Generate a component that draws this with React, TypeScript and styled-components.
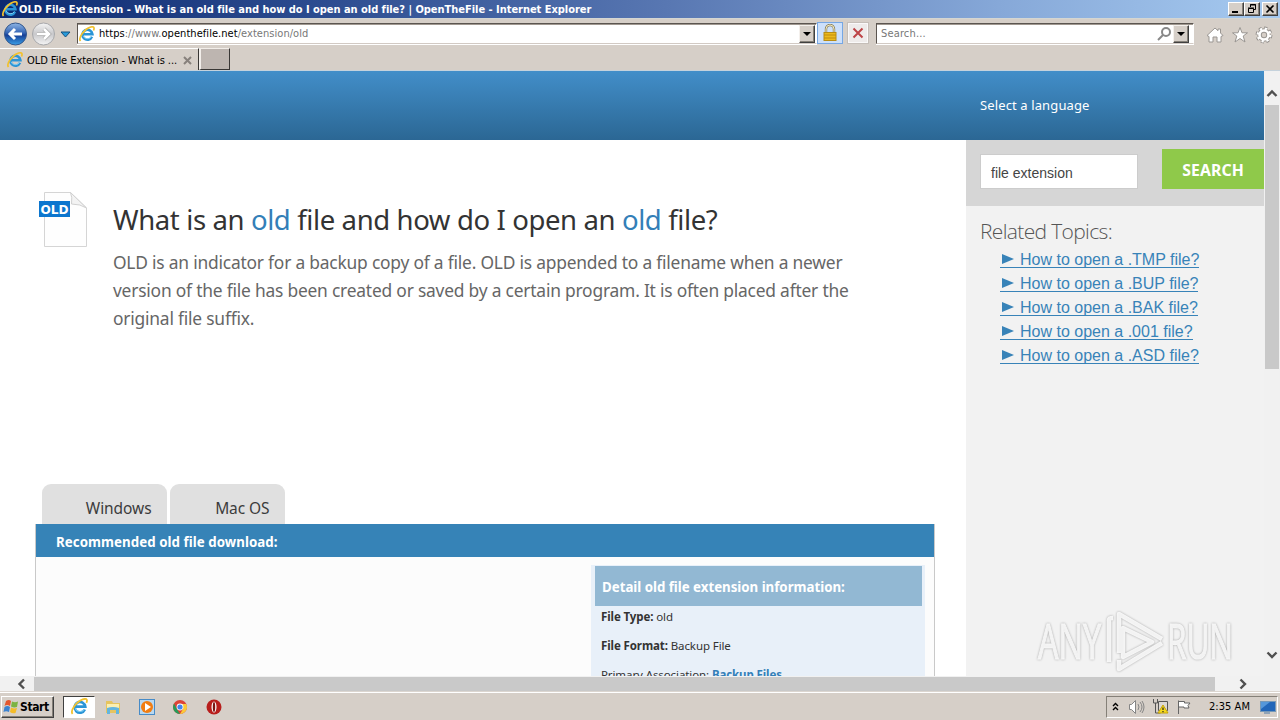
import styled, { createGlobalStyle, css } from "styled-components";

const GlobalStyle = createGlobalStyle`
  * {
    box-sizing: border-box;
  }

  body {
    margin: 0;
    overflow: hidden;
    font-family: "Noto Sans", "Open Sans", sans-serif;
  }
`;

const systemFont = css`
  font-family: "DejaVu Sans Condensed", "DejaVu Sans", sans-serif;
  font-stretch: condensed;
  font-size: 11px;
`;

// --- Window ---
const Window = styled.div`
  width: 1280px;
  height: 720px;
  display: flex;
  flex-direction: column;
  overflow: hidden;
  background: #d6cfc8;
`;

const TitleBar = styled.div`
  ${systemFont}
  height: 18px;
  flex: none;
  display: flex;
  align-items: center;
  padding: 0 2px;
  background: linear-gradient(90deg, #0d2a70 0%, #2c4c90 25%, #5877b2 52%, #86a8d8 78%, #a6caf0 100%);
  color: #fff;
`;

const WindowTitle = styled.span`
  flex: 1;
  margin-left: 1px;
  font-weight: 700;
  letter-spacing: -0.03px;
  white-space: nowrap;
`;

const WindowButton = styled.span<{ $gap?: number }>`
  width: 16px;
  height: 14px;
  margin-left: ${(props) => props.$gap || 0}px;
  display: flex;
  align-items: center;
  justify-content: center;
  background: #d6cfc8;
  border: 1px solid;
  border-color: #fff #404040 #404040 #fff;
  box-shadow: inset -1px -1px 0 #858078;
`;

const Toolbar = styled.div`
  height: 30px;
  flex: none;
  display: flex;
  align-items: flex-start;
  padding: 4px 7px 0 2px;
  border-top: 1px solid #d4d6d2;
`;

const NavButtons = styled.div`
  display: flex;
  align-items: center;
  width: 75px;
  height: 23px;
  margin-top: -1px;
`;

const Field = styled.div<{ $width: number }>`
  ${systemFont}
  width: ${(props) => props.$width}px;
  height: 21px;
  display: flex;
  align-items: center;
  padding-left: 1px;
  background: #fff;
  border: 1px solid;
  border-color: #5b5550 #fff #d2cac4 #5b5550;
  box-shadow: 0 1px 0 #fff, inset 0 1px 0 #a09890;
  color: #777;
`;

const FieldText = styled.span<{ $spacing?: number; $indent?: number }>`
  flex: 1;
  margin-left: ${(props) => props.$indent || 4}px;
  letter-spacing: ${(props) => props.$spacing || 0}px;
  white-space: nowrap;

  b {
    font-weight: 400;
    color: #000;
  }
`;

const DropButton = styled.span`
  width: 16px;
  height: 18px;
  display: flex;
  align-items: center;
  justify-content: center;
  background: #d6cfc8;
  border: 1px solid;
  border-color: #f4f0ec #404040 #404040 #f4f0ec;
  box-shadow: inset -1px -1px 0 #858078;

  &::after {
    content: "";
    border: 4px solid transparent;
    border-top-color: #000;
    border-bottom: 0;
  }
`;

const LockButton = styled.div`
  width: 26px;
  height: 22px;
  margin-top: -1px;
  display: flex;
  align-items: center;
  justify-content: center;
  background: #cde0fa;
  border: 1px solid #76a7e4;
`;

const StopButton = styled.div`
  width: 22px;
  height: 22px;
  margin: -1px 7px 0 4px;
  display: flex;
  align-items: center;
  justify-content: center;
  background: #eeebea;
  border: 1px solid #c5beb8;
  box-shadow: inset 0 0 0 1px #faf9f9;
`;

const ToolIcons = styled.div`
  flex: 1;
  height: 24px;
  display: flex;
  align-items: center;
  justify-content: flex-end;
  gap: 6.5px;
`;

const TabRow = styled.div`
  height: 23px;
  flex: none;
  display: flex;
  border-bottom: 1px solid #c5d2dc;
`;

const BrowserTab = styled.div`
  ${systemFont}
  width: 199px;
  display: flex;
  align-items: center;
  padding: 1px 6px 0 7px;
  border-top: 1px solid #fff;
  border-right: 1px solid #393735;
  color: #000;
`;

const TabLabel = styled.span`
  flex: 1;
  margin-left: 4px;
  letter-spacing: -0.05px;
  white-space: nowrap;
`;

const NewTab = styled.div`
  width: 31px;
  height: 22px;
  background: #bdb5b0;
  border: 1px solid;
  border-color: #f2eeea #393735 #393735 #f2eeea;
  border-left-width: 2px;
`;

// --- Web page ---
const Viewport = styled.div`
  height: 605px;
  flex: none;
  display: flex;
`;

const Page = styled.div`
  width: 1264px;
  display: flex;
  flex-direction: column;
  background: #fff;
`;

const Header = styled.div`
  height: 69px;
  flex: none;
  padding: 24px 0 0 980px;
  background: linear-gradient(#428ec9, #2b6794);
  color: #fff;
  font-size: 13px;
  line-height: 20px;
  letter-spacing: 0.12px;
`;

const Columns = styled.div`
  height: 536px;
  display: flex;
`;

const Main = styled.div`
  width: 966px;
  padding: 51px 31px 0 35px;
  overflow: hidden;
`;

const Intro = styled.div`
  height: 292px;
  display: flex;
`;

const FileIcon = styled.svg`
  width: 56px;
  height: 58px;
  flex: none;
  font: 700 11.5px "DejaVu Sans", sans-serif;
`;

const IntroText = styled.div`
  padding: 8px 0 0 22px;
`;

const Heading = styled.h1`
  margin: 0 0 7px;
  font-size: 27.5px;
  line-height: 42px;
  font-weight: 400;
  letter-spacing: -0.38px;
  color: #333;
  white-space: nowrap;

  em {
    font-style: normal;
    color: #337fb8;
  }
`;

const Lead = styled.p`
  margin: 0;
  font-size: 17.4px;
  line-height: 28px;
  letter-spacing: -0.21px;
  color: #666;
  white-space: nowrap;
`;

const OsTabs = styled.div`
  display: flex;
  gap: 3px;
  height: 41px;
  padding: 1px 0 0 7px;
`;

const OsTab = styled.div<{ $width: number }>`
  width: ${(props) => props.$width}px;
  padding: 12px 15.5px 0 0;
  border-radius: 9px 9px 0 0;
  background: #e0e0e0;
  color: #3c3c3c;
  font-size: 15.5px;
  line-height: 24px;
  letter-spacing: -0.08px;
  text-align: right;
`;

const Panel = styled.div`
  width: 900px;
  height: 160px;
  display: flex;
  flex-direction: column;
  background: #fcfcfc;
  border: 1px solid #c9c9c9;
  border-width: 0 1px;
`;

const PanelTitle = styled.div`
  height: 33px;
  flex: none;
  padding-left: 20px;
  background: #3683b7;
  color: #fff;
  font-size: 13.3px;
  line-height: 36px;
  font-weight: 700;
  letter-spacing: 0.05px;
`;

const Detail = styled.div`
  width: 334px;
  margin: 8px 9px 0 auto;
  padding: 1px 3px 0 4px;
  flex: 1;
  background: #e8f0f9;
`;

const DetailTitle = styled.div`
  height: 40px;
  padding-left: 7px;
  background: #92b8d3;
  color: #fff;
  font-size: 13.3px;
  line-height: 42px;
  font-weight: 700;
  letter-spacing: -0.02px;
`;

const DetailRow = styled.p`
  margin: 0 0 9px 6px;
  padding-top: 1px;
  color: #333;
  font-size: 11.5px;
  line-height: 19px;
  letter-spacing: -0.1px;
  white-space: nowrap;

  a {
    font-weight: 700;
    color: #337fb8;
  }
`;

const Sidebar = styled.div`
  width: 298px;
  background: #f2f2f2;
`;

const SearchBox = styled.div`
  height: 66px;
  display: flex;
  justify-content: space-between;
  padding: 9px 0 0 14px;
  background: #d6d6d6;
`;

const SearchInput = styled.div`
  width: 158px;
  height: 35px;
  margin-top: 5px;
  padding: 0 10px;
  background: #fff;
  border: 1px solid #ccc;
  color: #444;
  font: 14px/37px "Liberation Sans", Arial, sans-serif;
`;

const SearchButton = styled.div`
  width: 102px;
  height: 40px;
  background: #8fc94a;
  color: #fff;
  font-size: 15.8px;
  line-height: 43px;
  font-weight: 700;
  letter-spacing: 0.1px;
  text-align: center;
`;

const TopicsTitle = styled.h2`
  margin: 10px 0 5px 14px;
  color: #555;
  font: 300 21px/30px "Open Sans", "Noto Sans", sans-serif;
  letter-spacing: -0.65px;
`;

const Topics = styled.div`
  padding-left: 34px;
  display: flex;
  flex-direction: column;
  align-items: flex-start;
`;

const TopicLink = styled.a`
  height: 17px;
  margin-bottom: 7px;
  padding-top: 2px;
  display: flex;
  align-items: center;
  border-bottom: 1px solid #3883b8;
  color: #3883b8;
  font: 16px/16px "Liberation Sans", Arial, sans-serif;
  white-space: nowrap;

  svg {
    margin: 0 6px 0 2px;
  }
`;

// --- Scroll bars ---
const VScroll = styled.div`
  width: 16px;
  display: flex;
  flex-direction: column;
  align-items: center;
  padding: 17px 0 16px;
  background: #f1f1f1;
`;

const VThumb = styled.div`
  width: 14px;
  height: 264px;
  margin: 7px 0 auto;
  background: #c9c9c9;
`;

const HScroll = styled.div`
  height: 16px;
  flex: none;
  display: flex;
  align-items: center;
  padding: 0 32px 0 16px;
  background: #f1f1f1;
  border-bottom: 1px solid #dcd6d0;
`;

const HThumb = styled.div`
  width: 1181px;
  height: 14px;
  margin: 0 auto 0 8px;
  background: #c9c9c9;
`;

// --- Taskbar ---
const Taskbar = styled.div`
  ${systemFont}
  flex: 1;
  display: flex;
  align-items: center;
  padding: 1px 2px 1px 1px;
  border-top: 1px solid #fff;
`;

const StartButton = styled.div`
  width: 53px;
  height: 22px;
  display: flex;
  align-items: center;
  padding-left: 1px;
  border: 1px solid;
  border-color: #fff #404040 #404040 #fff;
  box-shadow: inset -1px -1px 0 #858078;
  color: #000;
  font-size: 12px;
  font-weight: 700;
  letter-spacing: -0.4px;
`;

const ActiveTask = styled.div`
  width: 32px;
  height: 22px;
  margin-left: 9px;
  display: flex;
  align-items: center;
  justify-content: center;
  background: #fff;
  border: 1px solid;
  border-color: #404040 #fff #fff #404040;
`;

const Pinned = styled.div`
  flex: 1;
  display: flex;
  align-items: center;
  gap: 18px;
  margin-left: 10px;
`;

const Tray = styled.div`
  width: 172px;
  height: 22px;
  display: flex;
  align-items: center;
  padding-left: 5px;
  border: 1px solid;
  border-color: #858078 #fff #fff #858078;
  color: #000;
`;

const TrayIcon = styled.svg<{ $gap: number }>`
  flex: none;
  margin-left: ${(props) => props.$gap}px;
`;

const Clock = styled.span`
  width: 42px;
  margin: 0 9px 0 17px;
  letter-spacing: 0.05px;
  white-space: nowrap;
`;

// Translucent mark lying over the bottom right of the page
const Watermark = styled.div`
  position: absolute;
  left: 1036px;
  top: 606px;
  width: 220px;
  height: 70px;

  svg {
    display: block;
    filter: drop-shadow(0 0 1px #999);
    font: 500 50px "Open Sans", sans-serif;
  }
`;

function IeIcon({ size = 16 }: { size?: number }) {
  return (
    <svg width={size} height={size} viewBox="0 0 16 16" fill="none">
      <path d="M13 10.800A5 5 0 1 1 13.400 8.200H4.500" stroke="#2b95d6" strokeWidth="2.600" />
      <path d="M12.500 10.600A4.800 4.800 0 0 1 4 9.700M4 6.500a4.500 4.500 0 0 1 4-3" stroke="#7dcdf3" strokeWidth="1" />
      <path d="M1.500 15C-1 12 5 3.500 11 1.300c4-1.500 4.700.6 3.500 3.200" stroke="#f2c12e" strokeWidth="1.700" />
    </svg>
  );
}

function NavIcons() {
  return (
    <svg width="75" height="24" viewBox="0 0 75 24">
      <defs>
        <linearGradient id="back" x2="0" y2="1">
          <stop stopColor="#8fb6e5" />
          <stop offset=".45" stopColor="#3565b5" />
          <stop offset=".55" stopColor="#173f96" />
          <stop offset="1" stopColor="#39a0e8" />
        </linearGradient>
        <linearGradient id="forward" x2="0" y2="1">
          <stop stopColor="#f5f5f5" />
          <stop offset=".5" stopColor="#c8c8cb" />
          <stop offset="1" stopColor="#f5f5f5" />
        </linearGradient>
      </defs>
      <circle cx="13.5" cy="12" r="11" fill="url(#back)" stroke="#34578c" />
      <path d="M20 12H8m5-5-5 5 5 5" fill="none" stroke="#fff" strokeWidth="3" />
      <circle cx="41.5" cy="12" r="11" fill="url(#forward)" stroke="#a7a8ab" />
      <path d="M35 12h12m-5-5 5 5-5 5" fill="none" stroke="#aaa" strokeWidth="4" />
      <path d="M35 12h12m-5-5 5 5-5 5" fill="none" stroke="#fff" strokeWidth="2.5" />
      <path d="M59 10h9l-4.500 5z" fill="#279bdb" stroke="#14507e" />
    </svg>
  );
}

function Chevron({ d, width = 16, height = 16 }: { d: string; width?: number; height?: number }) {
  return (
    <svg width={width} height={height} viewBox={`0 0 ${width} ${height}`}>
      <path d={d} fill="none" stroke="#505050" strokeWidth="2.4" />
    </svg>
  );
}

const topics = ["TMP", "BUP", "BAK", "001", "ASD"];

function BrowserChrome() {
  return (
    <>
      <TitleBar>
        <IeIcon />
        <WindowTitle>
          OLD File Extension - What is an old file and how do I open an old file? | OpenTheFile - Internet Explorer
        </WindowTitle>
        <WindowButton>
          <svg width="10" height="10"><path d="M1 8h6" stroke="#000" strokeWidth="2" /></svg>
        </WindowButton>
        <WindowButton>
          <svg width="10" height="10" fill="none" stroke="#000">
            <path d="M3.500 3V.5h5v5H7M3 1h6M1.500 4.500h5v4h-5zM1 4h6" />
          </svg>
        </WindowButton>
        <WindowButton $gap={2}>
          <svg width="10" height="10"><path d="m1.500 1.500 7 7m0-7-7 7" stroke="#000" strokeWidth="1.600" /></svg>
        </WindowButton>
      </TitleBar>
      <Toolbar>
        <NavButtons>
          <NavIcons />
        </NavButtons>
        <Field $width={740}>
          <IeIcon />
          <FieldText $spacing={0.05}>
            <b>https</b>://www.<b>openthefile.net</b>/extension/old
          </FieldText>
          <DropButton />
          <svg width="1" height="18" />
        </Field>
        <LockButton>
          <svg width="16" height="18" viewBox="0 0 16 18">
            <path d="M4 9V5a4 4 0 0 1 8 0v4" fill="none" stroke="#8a8060" strokeWidth="2.400" />
            <path d="M4 9V5a4 4 0 0 1 8 0v4" fill="none" stroke="#f2e9ba" strokeWidth="1" />
            <rect x="2" y="8.500" width="12" height="8" fill="#ecb91b" stroke="#b88c14" />
            <path d="M2 11h12M2 14h12" stroke="#c18c0c" />
          </svg>
        </LockButton>
        <StopButton>
          <svg width="12" height="12"><path d="m1.500 1.500 9 9m0-9-9 9" stroke="#bd4447" strokeWidth="2" /></svg>
        </StopButton>
        <Field $width={318}>
          <FieldText $spacing={0.15} $indent={3}>Search...</FieldText>
          <svg width="16" height="16" fill="none" stroke="#888" strokeWidth="2">
            <circle cx="9" cy="6" r="4" />
            <path d="m6 9-5 5" />
          </svg>
          <DropButton />
          <svg width="4" height="18" />
        </Field>
        <ToolIcons>
          <svg width="18" height="18" fill="#fff" stroke="#9a9692">
            <path d="M1 9.500 9 2l3 2.700V3h2.500v4L17 9.500l-2 1V16h-4v-5H7v5H3v-5.500z" />
          </svg>
          <svg width="18" height="18" fill="#fff" stroke="#9a9692">
            <path d="m9 1.500 2 5.300h5.500L12.200 10l1.800 6-5-3.500L4 16l1.800-6-4.300-3.200H7z" />
          </svg>
          <svg width="18" height="18" fill="none">
            <circle cx="9" cy="9" r="6.600" stroke="#8f8b87" strokeWidth="3.600" strokeDasharray="2.900 2.280" />
            <circle cx="9" cy="9" r="4.500" stroke="#9a9692" strokeWidth="4.500" />
            <circle cx="9" cy="9" r="6.300" stroke="#fff" strokeWidth="2.400" strokeDasharray="2.200 2.750" />
            <circle cx="9" cy="9" r="4.500" stroke="#fff" strokeWidth="2.600" />
          </svg>
        </ToolIcons>
      </Toolbar>
      <TabRow>
        <BrowserTab>
          <IeIcon />
          <TabLabel>OLD File Extension - What is ...</TabLabel>
          <svg width="9" height="9"><path d="m1 1 7 7m0-7-7 7" stroke="#87817c" strokeWidth="2" /></svg>
        </BrowserTab>
        <NewTab />
      </TabRow>
    </>
  );
}

function App() {
  return (
    <Window>
      <GlobalStyle />
      <BrowserChrome />
      <Viewport>
        <Page>
          <Header>Select a language</Header>
          <Columns>
            <Main>
              <Intro>
                <FileIcon>
                  <path d="M9.500 1.500h26l16 15.500v38.500h-42z" fill="#fefefe" stroke="#d5d5d5" />
                  <path d="M35.500 1.500 51.500 17q-6-4-15-4 1-7-1-11.500" fill="#f3f3f3" stroke="#d0d0d0" />
                  <rect x="4" y="10" width="31" height="16" fill="#0c76ce" />
                  <text x="5.500" y="22.500" fill="#fff" textLength="28" lengthAdjust="spacingAndGlyphs">OLD</text>
                </FileIcon>
                <IntroText>
                  <Heading>
                    What is an <em>old</em> file and how do I open an <em>old</em> file?
                  </Heading>
                  <Lead>
                    OLD is an indicator for a backup copy of a file. OLD is appended to a filename when a newer
                    <br />
                    version of the file has been created or saved by a certain program. It is often placed after the
                    <br />
                    original file suffix.
                  </Lead>
                </IntroText>
              </Intro>
              <OsTabs>
                <OsTab $width={125}>Windows</OsTab>
                <OsTab $width={115}>Mac OS</OsTab>
              </OsTabs>
              <Panel>
                <PanelTitle>Recommended old file download:</PanelTitle>
                <Detail>
                  <DetailTitle>Detail old file extension information:</DetailTitle>
                  <DetailRow><b>File Type:</b> old</DetailRow>
                  <DetailRow><b>File Format:</b> Backup File</DetailRow>
                  <DetailRow>Primary Association: <a>Backup Files</a></DetailRow>
                </Detail>
              </Panel>
            </Main>
            <Sidebar>
              <SearchBox>
                <SearchInput>file extension</SearchInput>
                <SearchButton>SEARCH</SearchButton>
              </SearchBox>
              <TopicsTitle>Related Topics:</TopicsTitle>
              <Topics>
                {topics.map((ext) => (
                  <TopicLink key={ext}>
                    <svg width="12" height="12"><path d="M0 0v10l12-5z" fill="#3883b8" /></svg>
                    How to open a .{ext} file?
                  </TopicLink>
                ))}
              </Topics>
            </Sidebar>
          </Columns>
        </Page>
        <VScroll>
          <Chevron d="m3.500 8 4.500-4.500L12.500 8" height={10} />
          <VThumb />
          <Chevron d="m3.500 2.500 4.500 4.500 4.500-4.500" height={10} />
        </VScroll>
      </Viewport>
      <HScroll>
        <Chevron d="M8 3.500 3.500 8 8 12.500" width={10} />
        <HThumb />
        <Chevron d="M2.500 3.500 7 8l-4.500 4.500" width={10} />
      </HScroll>
      <Taskbar>
        <StartButton>
          <svg width="17" height="17">
            <path d="M3 3q3-2 5 0L7 8q-3-2-5.500 0z" fill="#e4572e" />
            <path d="M9 3.500q3 1.500 6 0L14 9q-3 1-6-.500z" fill="#7cb342" />
            <path d="M1.500 9q3-2 5.500 0l-1 5q-3-1.500-5.500 0z" fill="#3b82d0" />
            <path d="M8 9.500q3 1.500 6 .5l-1.500 5q-3 1-5.500-1z" fill="#f4bc29" />
          </svg>
          Start
        </StartButton>
        <ActiveTask>
          <IeIcon size={17} />
        </ActiveTask>
        <Pinned>
          <svg width="16" height="16">
            <path d="M1 2h6l1 2h7v10H1z" fill="#e6c45f" />
            <path d="M2 5h12v4H2z" fill="#fbefb1" />
            <path d="M2 15V9q6-2 12 0v6h-3v-4H5v4z" fill="#63b5df" />
          </svg>
          <svg width="16" height="16">
            <rect x=".5" y=".5" width="15" height="15" fill="#b9d8f0" stroke="#478bc7" />
            <circle cx="8" cy="8" r="6" fill="#f17d12" />
            <path d="m6 4 6 4-6 4z" fill="#fff" />
          </svg>
          <svg width="14" height="14" viewBox="0 0 14 14">
            <circle cx="7" cy="7" r="7" fill="#dc4437" />
            <path d="M1 3.500 5 11l2 3A7 7 0 0 1 1 3.500" fill="#269b59" />
            <path d="M7 4h6.300A7 7 0 0 1 7 14l3-5z" fill="#fbca38" />
            <circle cx="7" cy="7" r="3.400" fill="#fff" />
            <circle cx="7" cy="7" r="2.600" fill="#4385ed" />
          </svg>
          <svg width="17" height="16">
            <circle cx="9" cy="8" r="7.500" fill="#b81e1c" />
            <ellipse cx="9" cy="8" rx="2.500" ry="5.500" fill="#fff" />
            <ellipse cx="9" cy="8" rx="1.200" ry="5" fill="#7c1513" />
          </svg>
        </Pinned>
        <Tray>
          <svg width="7" height="10" fill="none" stroke="#000" strokeWidth="1.400">
            <path d="m1 4 2.500-2.500L6 4M1 8l2.500-2.500L6 8" />
          </svg>
          <TrayIcon $gap={9} width="17" height="16" fill="none" stroke="#858585">
            <path d="M1.500 5.500h2l4-4v13l-4-4h-2z" fill="#fff" />
            <path d="M10 5q2 3 0 6M12 3q4 5 0 10M14 2q4 6 0 12" />
          </TrayIcon>
          <TrayIcon $gap={7} width="17" height="17">
            <path d="M6.500 3.500h9v9h-9z" fill="#dcd8d4" stroke="#555" />
            <path d="M1.500 1v4h4V1M3.500 5v10h5" fill="none" stroke="#555" />
            <path d="m11 7 5 8H6z" fill="#f5d91e" stroke="#c7a406" />
            <path d="M11 9.500V12m0 1v1.300" stroke="#222" strokeWidth="1.200" />
          </TrayIcon>
          <TrayIcon $gap={7} width="16" height="16" fill="#fff" stroke="#666">
            <path d="M2.500 15V1.500m0 1h6V4H14l-2 2.500 1 2.500H8V8H2.500" />
          </TrayIcon>
          <Clock>2:35 AM</Clock>
          <svg width="16" height="14">
            <rect x=".5" y="1.500" width="15" height="10" fill="#2266b9" stroke="#7698b7" />
            <path d="M1 2h9L1 9z" fill="#5597da" />
            <path d="M4 13h6" stroke="#4b79a6" />
          </svg>
        </Tray>
      </Taskbar>
      <Watermark>
        <svg width="220" height="70">
          <g fill="#fff" stroke="#fff" strokeWidth="1.200" opacity=".85">
            <text x="2" y="53" textLength="63" lengthAdjust="spacingAndGlyphs">ANY</text>
            <text x="131" y="53" textLength="66" lengthAdjust="spacingAndGlyphs">RUN</text>
          </g>
          <g fill="none" stroke="#fff" strokeWidth="4.500" strokeLinejoin="round" opacity=".85">
            <path d="M73 56V14q0-2 4-2M83 47V8l43 25" />
            <path d="M126 37 83 63V54M87 22l29 14-29 15z" />
          </g>
        </svg>
      </Watermark>
    </Window>
  );
}

export default App;
